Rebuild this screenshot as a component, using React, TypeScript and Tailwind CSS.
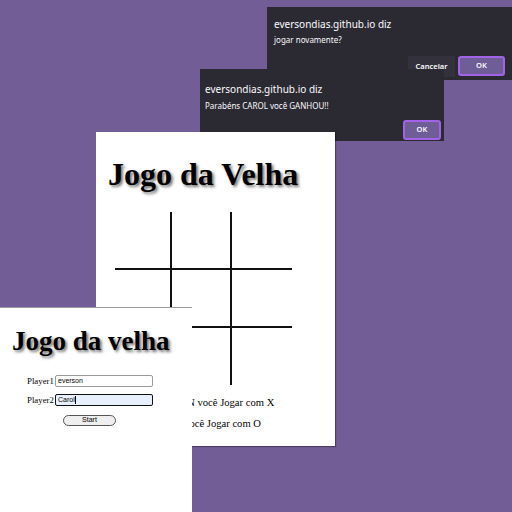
import React from "react";

function Dialog1() {
  return (
    <div className="absolute left-[267px] top-[7px] w-[250px] h-[73px] bg-[#2b2a33] text-[#fbfbfe] font-['Noto_Sans',sans-serif]">
      <div className="pl-[7px] pt-[10px] text-[10px] leading-[14px]">eversondias.github.io diz</div>
      <div className="pl-[7px] pt-[3px] text-[8px] leading-[12px]">jogar novamente?</div>
      <div className="absolute left-[141px] top-[49px] w-[47px] h-[21px] bg-[#33323c] flex items-center justify-center text-[7.5px] font-semibold">Cancelar</div>
      <div className="absolute left-[191px] top-[49px] w-[47px] h-[20px] bg-[#6f5d97] border-2 border-[#a263e8] rounded-[3px] flex items-center justify-center text-[7.5px] font-semibold">OK</div>
    </div>
  );
}

function Dialog2() {
  return (
    <div className="absolute left-[200px] top-[69px] w-[244px] h-[72px] bg-[#2b2a33] text-[#fbfbfe] font-['Noto_Sans',sans-serif]">
      <div className="pl-[5px] pt-[13px] text-[10px] leading-[14px]">eversondias.github.io diz</div>
      <div className="pl-[5px] pt-[4px] text-[8px] leading-[12px]">Parabéns CAROL você GANHOU!!</div>
      <div className="absolute left-[203px] top-[51px] w-[38px] h-[20px] bg-[#6f5d97] border-2 border-[#a263e8] rounded-[3px] flex items-center justify-center text-[7.5px] font-semibold">OK</div>
    </div>
  );
}

function Panel1() {
  const cells = [0, 1, 2, 3, 4, 5, 6, 7, 8];
  return (
    <div className="absolute left-[96px] top-[132px] w-[239px] h-[314px] bg-white shadow-[1px_1px_1px_rgba(0,0,0,0.35)] font-['Liberation_Serif',serif] text-black">
      <h1 className="pl-[12px] pt-[24px] text-[32px] leading-[36px] font-bold [text-shadow:2px_2px_3px_rgba(0,0,0,0.55)]">Jogo da Velha</h1>
      <div className="ml-[19px] mt-[20px] grid grid-cols-[57px_60px_60px] grid-rows-[58px_58px_57px]">
        {cells.map((i) => {
          const r = Math.floor(i / 3);
          const c = i % 3;
          return (
            <div
              key={i}
              className={
                (c < 2 ? "border-r-2 " : "border-r-0 ") +
                (r < 2 ? "border-b-2 " : "border-b-0 ") +
                "border-[#111]"
              }
            />
          );
        })}
      </div>
      <div className="pl-[50px] mt-[7px] text-[10.6px] leading-[21px] whitespace-nowrap">
        <div>EVERSON você Jogar com X</div>
        <div>CAROL você Jogar com O</div>
      </div>
    </div>
  );
}

function Panel2() {
  return (
    <div className="absolute left-0 top-[307px] w-[192px] h-[205px] bg-white border-t border-[#9a9a9a] font-['Liberation_Serif',serif] text-black">
      <h1 className="pl-[12px] pt-[18px] text-[27px] leading-[30px] font-bold [text-shadow:2px_2px_3px_rgba(0,0,0,0.55)]">Jogo da velha</h1>
      <div className="mt-[19px] flex flex-col">
        <div className="flex items-center h-[12px] pl-[27px]">
          <span className="text-[8.8px] leading-[12px] w-[28px]">Player1</span>
          <div className="w-[98px] h-[12px] border border-[#9a9a9a] rounded-[2px] bg-white flex items-center pl-[2px] text-[7px] font-['Liberation_Sans',sans-serif]">everson</div>
        </div>
        <div className="mt-[7px] flex items-center h-[12px] pl-[27px]">
          <span className="text-[8.8px] leading-[12px] w-[28px]">Player2</span>
          <div className="w-[98px] h-[12px] border border-[#111] rounded-[2px] bg-[#e8f0fe] flex items-center pl-[2px] text-[7px] font-['Liberation_Sans',sans-serif]">Carol<span className="w-px h-[8px] bg-black" /></div>
        </div>
        <div className="mt-[9px] pl-[63px]">
          <div className="w-[53px] h-[11px] rounded-full border border-[#555] bg-[#efefef] flex items-center justify-center text-[7px] font-['Liberation_Sans',sans-serif]">Start</div>
        </div>
      </div>
    </div>
  );
}

export default function App() {
  return (
    <div className="relative w-[512px] h-[512px] overflow-hidden bg-[#735d97]">
      <Dialog1 />
      <Dialog2 />
      <Panel1 />
      <Panel2 />
    </div>
  );
}
